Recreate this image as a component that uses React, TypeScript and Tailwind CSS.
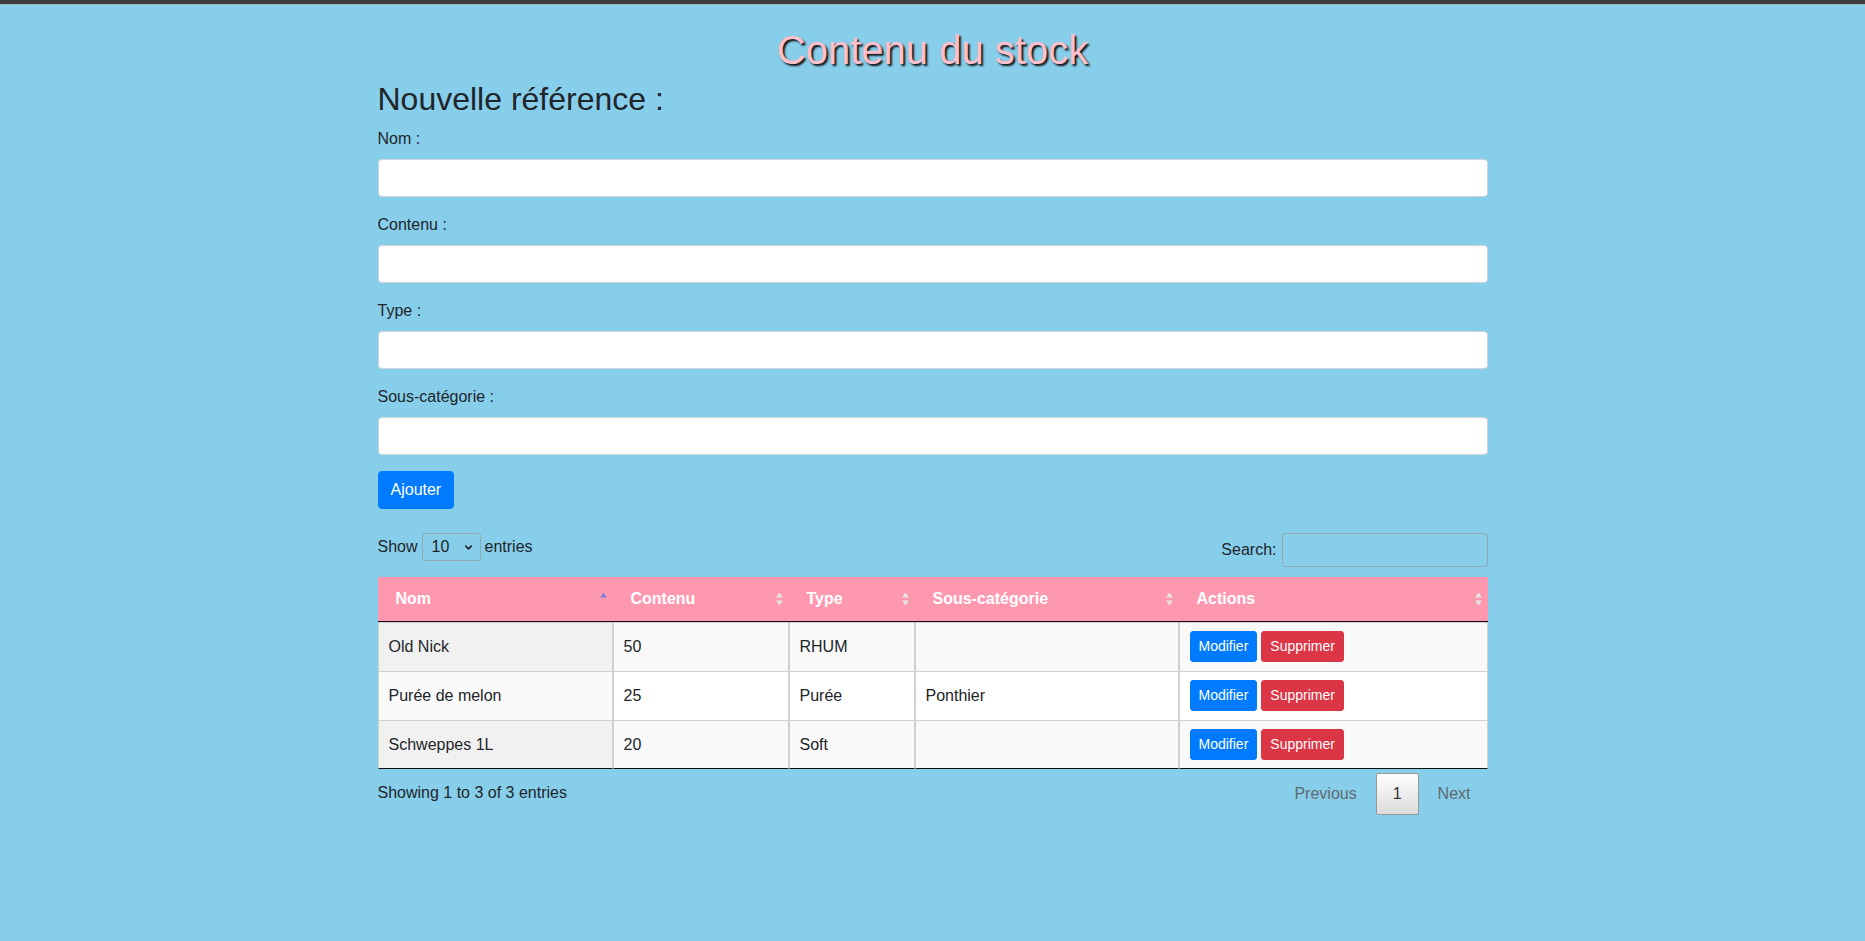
import React from 'react';
import { ChevronDown } from 'lucide-react';

type Item = { nom: string; contenu: string; type: string; sous: string };

const items: Item[] = [
  { nom: 'Old Nick', contenu: '50', type: 'RHUM', sous: '' },
  { nom: 'Purée de melon', contenu: '25', type: 'Purée', sous: 'Ponthier' },
  { nom: 'Schweppes 1L', contenu: '20', type: 'Soft', sous: '' },
];

const SortIcon: React.FC<{ asc?: boolean }> = ({ asc }) => (
  <svg width="7" height="13" viewBox="0 0 7 13" className="absolute right-[6px] top-1/2 -translate-y-1/2">
    <polygon points="0,5 3.5,0 7,5" fill={asc ? '#7f80d6' : '#e3e3e3'} />
    {!asc && <polygon points="0,8 3.5,13 7,8" fill="#e3e3e3" />}
  </svg>
);

const Field: React.FC<{ label: string }> = ({ label }) => (
  <div className="mb-4">
    <label className="block leading-6 mb-2">{label}</label>
    <input type="text" className="block w-full h-[38px] bg-white border border-[#ced4da] rounded-[4px] px-3" />
  </div>
);

const headers = ['Nom', 'Contenu', 'Type', 'Sous-catégorie', 'Actions'];

export default function App() {
  return (
    <div className="min-h-screen bg-[#87ceeb] text-[#212529] text-base font-['Liberation_Sans',Arial,sans-serif]">
      <div className="h-[4px] bg-[#3b3b3b]" />
      <div className="h-px bg-[#9fb7c1]" />

      <h1 className="mt-[21px] text-center text-[40px] leading-[48px] text-[#ffc0cb] [text-shadow:2px_2px_2px_#111]">
        Contenu du stock
      </h1>

      <div className="w-[1110px] mx-auto">
        <h2 className="mt-[6px] mb-[9px] text-[32px] leading-[38px]">Nouvelle référence :</h2>

        <form onSubmit={(e) => e.preventDefault()}>
          <Field label="Nom :" />
          <Field label="Contenu :" />
          <Field label="Type :" />
          <Field label="Sous-catégorie :" />
          <button className="h-[38px] px-3 bg-[#007bff] text-white rounded-[4px] border border-[#007bff] leading-6">
            Ajouter
          </button>
        </form>

        {/* Table controls */}
        <div className="mt-[24px] flex justify-between items-start">
          <div className="flex items-center h-[28px]">
            <span>Show</span>
            <div className="relative mx-[4px]">
              <select className="appearance-none w-[59px] h-[28px] border border-[#8fa9b5] rounded-[3px] pl-[9px] bg-transparent leading-6">
                <option>10</option>
                <option>25</option>
                <option>50</option>
                <option>100</option>
              </select>
              <ChevronDown size={11} strokeWidth={3.5} className="absolute right-[7px] top-[9px] pointer-events-none text-[#222]" />
            </div>
            <span>entries</span>
          </div>
          <div className="flex items-center h-[34px]">
            <span className="mr-[5px]">Search:</span>
            <input type="search" className="w-[206px] h-[34px] border border-[#8fa9b5] rounded-[3px] px-[5px] bg-transparent" />
          </div>
        </div>

        <table className="mt-[10px] w-full table-fixed border-separate border-spacing-0">
          <colgroup>
            <col className="w-[235px]" />
            <col className="w-[176px]" />
            <col className="w-[126px]" />
            <col className="w-[264px]" />
            <col className="w-[309px]" />
          </colgroup>
          <thead>
            <tr className="bg-[#fe98af]">
              {headers.map((h, i) => (
                <th
                  key={h}
                  className="relative text-left text-white font-bold leading-6 pl-[18px] pr-[18px] py-[10px] border-b border-[#111]"
                >
                  {h}
                  <SortIcon asc={i === 0} />
                </th>
              ))}
            </tr>
          </thead>
          <tbody>
            {items.map((it, r) => {
              const odd = r % 2 === 0;
              const bg = odd ? 'bg-[#f9f9f9]' : 'bg-white';
              const sortBg = odd ? 'bg-[#f1f1f1]' : 'bg-[#fafafa]';
              const last = r === items.length - 1;
              const cell = `px-[10px] pt-[8px] leading-6 align-middle border-l border-r border-t border-[#d0d0d0] ${
                last ? 'pb-[8px] border-b border-b-[#111]' : 'pb-[9px]'
              }`;
              return (
                <tr key={it.nom}>
                  <td className={`${cell} ${sortBg}`}>{it.nom}</td>
                  <td className={`${cell} ${bg}`}>{it.contenu}</td>
                  <td className={`${cell} ${bg}`}>{it.type}</td>
                  <td className={`${cell} ${bg}`}>{it.sous}</td>
                  <td className={`${cell} ${bg}`}>
                    <div className="flex gap-[4px]">
                      <button className="h-[31px] px-2 text-sm leading-[21px] text-white bg-[#007bff] border border-[#007bff] rounded-[3px]">
                        Modifier
                      </button>
                      <button className="h-[31px] px-2 text-sm leading-[21px] text-white bg-[#dc3545] border border-[#dc3545] rounded-[3px]">
                        Supprimer
                      </button>
                    </div>
                  </td>
                </tr>
              );
            })}
          </tbody>
        </table>

        {/* Footer */}
        <div className="flex justify-between items-start">
          <div className="pt-[12px] leading-6">Showing 1 to 3 of 3 entries</div>
          <div className="pt-[4px] flex items-center">
            <span className="px-4 py-2 leading-6 text-[#5e6a70] border border-transparent">Previous</span>
            <span className="ml-[2px] min-w-[42px] text-center px-4 py-2 leading-6 text-[#333] border border-[#979797] rounded-[2px] bg-gradient-to-b from-white to-[#dcdcdc]">
              1
            </span>
            <span className="ml-[2px] px-4 py-2 leading-6 text-[#5e6a70] border border-transparent">Next</span>
          </div>
        </div>
      </div>
    </div>
  );
}
